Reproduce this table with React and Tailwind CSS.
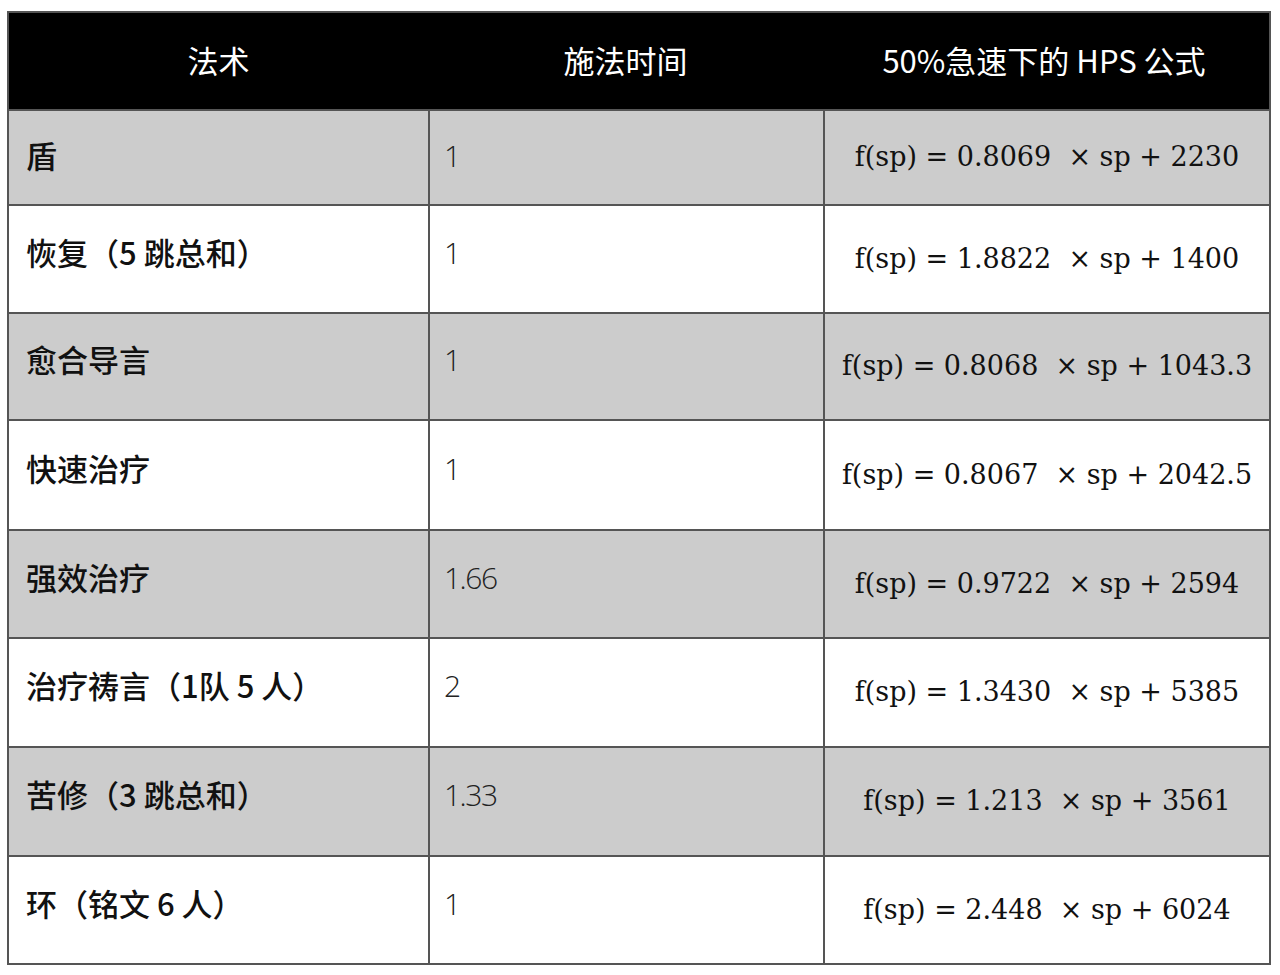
const rows = [
  { name: '盾', time: '1', k: '0.8069', b: '2230' },
  { name: '恢复（5 跳总和）', time: '1', k: '1.8822', b: '1400' },
  { name: '愈合导言', time: '1', k: '0.8068', b: '1043.3' },
  { name: '快速治疗', time: '1', k: '0.8067', b: '2042.5' },
  { name: '强效治疗', time: '1.66', k: '0.9722', b: '2594' },
  { name: '治疗祷言（1队 5 人）', time: '2', k: '1.3430', b: '5385' },
  { name: '苦修（3 跳总和）', time: '1.33', k: '1.213', b: '3561' },
  { name: '环（铭文 6 人）', time: '1', k: '2.448', b: '6024' },
];

const heights = ['h-[95px]', 'h-[108px]', 'h-[107px]', 'h-[110px]', 'h-[108px]', 'h-[109px]', 'h-[109px]', 'h-[108px]'];

export default function App() {
  return (
    <div className="min-h-[975px] bg-white pt-[11px] pl-[7px]">
      <div className="w-[1264px] border-2 border-[#555]">
        <div className="grid grid-cols-[419px_395px_1fr] h-[96px] bg-black text-white text-[31px] font-['Noto_Sans_CJK_SC',sans-serif]">
          <div className="flex items-center justify-center pb-[2px]">法术</div>
          <div className="flex items-center justify-center pb-[2px]">施法时间</div>
          <div className="flex items-center justify-center pb-[2px] pr-[4px]">50%急速下的 HPS 公式</div>
        </div>
        {rows.map((r, i) => (
          <div
            key={i}
            className={`grid grid-cols-[419px_395px_1fr] border-t-2 border-[#555] ${heights[i]} ${i % 2 === 0 ? 'bg-[#cccccc]' : 'bg-white'}`}
          >
            <div className={`flex items-center pl-[17px] ${i === 0 ? 'pb-[4px]' : 'pb-[14px]'} text-[31px] text-[#111] font-medium font-['Noto_Sans_CJK_SC',sans-serif]`}>
              {r.name}
            </div>
            <div className={`flex items-center pl-[14px] ${i === 0 ? 'pb-[4px]' : 'pb-[14px]'} border-l-2 border-[#555] text-[30px] font-light tracking-[-1.5px] text-[#222] font-['Open_Sans',sans-serif]`}>
              {r.time}
            </div>
            <div className="flex items-center justify-center border-l-2 border-[#555] text-[27px] text-[#111] font-['DejaVu_Serif',serif] whitespace-pre">
              {`f(sp) = ${r.k}  × sp + ${r.b}`}
            </div>
          </div>
        ))}
      </div>
    </div>
  );
}
